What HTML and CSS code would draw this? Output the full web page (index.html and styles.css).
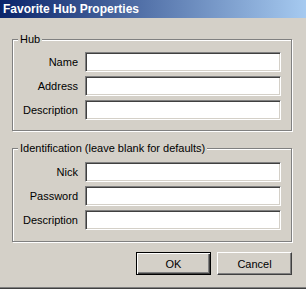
FILE: index.html
```html
<!DOCTYPE html>
<html>
<head>
<meta charset="utf-8">
<link rel="stylesheet" href="styles.css">
</head>
<body>
<div class="window">
  <div class="titlebar"><span class="title">Favorite Hub Properties</span></div>
  <div class="content">
    <fieldset class="group hub">
      <legend>Hub</legend>
      <div class="rows">
        <label class="lbl">Name</label><input class="field" type="text">
        <label class="lbl">Address</label><input class="field" type="text">
        <label class="lbl">Description</label><input class="field" type="text">
      </div>
    </fieldset>
    <fieldset class="group ident">
      <legend>Identification (leave blank for defaults)</legend>
      <div class="rows">
        <label class="lbl">Nick</label><input class="field" type="text">
        <label class="lbl">Password</label><input class="field" type="password">
        <label class="lbl">Description</label><input class="field" type="text">
      </div>
    </fieldset>
    <div class="buttons">
      <button class="btn default">OK</button>
      <button class="btn">Cancel</button>
    </div>
  </div>
</div>
</body>
</html>
```
FILE: styles.css
```css
* { box-sizing: border-box; }
html, body { margin: 0; padding: 0; }
body {
  width: 306px;
  height: 289px;
  background: #d4d0c8;
  font-family: "Liberation Sans", Arial, sans-serif;
  font-size: 11px;
  color: #000;
  overflow: hidden;
}
.window {
  width: 306px;
  height: 289px;
  display: flex;
  flex-direction: column;
  border-bottom: 1px solid #404040;
  box-shadow: inset 0 -1px 0 #808080;
}
.titlebar {
  height: 18px;
  background: linear-gradient(to right, #0a246a, #a6caf0);
  display: flex;
  align-items: center;
  padding-left: 3px;
}
.title {
  color: #fff;
  font-weight: bold;
  font-size: 12px;
}
.content {
  padding: 15px 0 0 12px;
  width: 292px;
  display: flex;
  flex-direction: column;
}
.group {
  margin: 0;
  padding: 6px 10px 10px 0;
  min-width: 0;
  border: 1px solid #808080;
  box-shadow: inset 1px 1px 0 #fff, 1px 1px 0 #fff;
}
.group legend {
  margin-left: 5px;
  padding: 0 2px;
  line-height: 13px;
  background: #d4d0c8;
}
.ident {
  margin-top: 11px;
  padding-top: 7px;
  padding-bottom: 11px;
}
.rows {
  display: grid;
  grid-template-columns: 65px 196px;
  column-gap: 7px;
  row-gap: 4px;
  align-items: center;
}
.lbl {
  text-align: right;
  white-space: nowrap;
}
.field {
  width: 196px;
  height: 20px;
  margin: 0;
  padding: 0 2px;
  background: #fff;
  border: 1px solid;
  border-color: #808080 #fff #fff #808080;
  box-shadow: inset 1px 1px 0 #404040, inset -1px -1px 0 #d4d0c8;
  outline: none;
  font: inherit;
}
.buttons {
  margin-top: 10px;
  display: flex;
  justify-content: flex-end;
  gap: 6px;
}
.btn {
  width: 75px;
  height: 23px;
  margin: 0;
  padding: 0;
  background: #d4d0c8;
  font: inherit;
  color: #000;
  border: 1px solid;
  border-color: #fff #404040 #404040 #fff;
  box-shadow: inset -1px -1px 0 #808080;
}
.btn.default {
  border: 1px solid #000;
  box-shadow: inset 1px 1px 0 #fff, inset -1px -1px 0 #404040, inset -2px -2px 0 #808080;
}
```
